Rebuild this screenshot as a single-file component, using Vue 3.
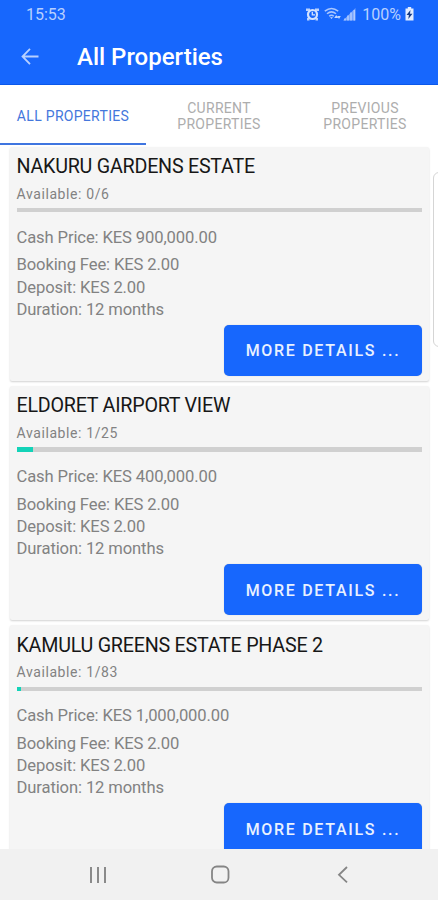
<script setup>
const tabs = ['ALL PROPERTIES', 'CURRENT PROPERTIES', 'PREVIOUS PROPERTIES']

const properties = [
  { name: 'NAKURU GARDENS ESTATE', taken: 0, total: 6, price: '900,000.00' },
  { name: 'ELDORET AIRPORT VIEW', taken: 1, total: 25, price: '400,000.00' },
  { name: 'KAMULU GREENS ESTATE PHASE 2', taken: 1, total: 83, price: '1,000,000.00' },
]
</script>

<template>
  <div class="screen">
    <header class="header">
      <div class="status">
        <span class="time">15:53</span>
        <div class="status-right">
          <svg class="alarm" width="13" height="13" viewBox="0 0 13 13">
            <path d="M0 .5h4v2.500H0zM13 .5H9v2.500h4zM1 10h2.500v2.500H1zM12 10H9.500v2.500H12z" fill="#bcd3ff" />
            <circle cx="6.500" cy="6.500" r="4.500" fill="#1767fb" stroke="#d3e2ff" stroke-width="2.200" />
            <path d="M6.300 3.800v3h2.700" fill="none" stroke="#d3e2ff" stroke-width="1.300" />
          </svg>
          <svg class="wifi" width="18" height="14" viewBox="0 0 18 14">
            <g fill="none" stroke="#a9c6ff" stroke-width="1.500">
              <path d="M.8 4.200Q7.500-1.300 14.200 4.200" />
              <path d="M3 6.800Q7.500 3 12 6.800" />
              <path d="M5.200 9.200Q7.500 7.200 9.800 9.200" />
            </g>
            <path d="M6 10.200h3L7.500 12zM10.200 11l2-3 2 3zM13.200 9h3.600L15 12z" fill="#c4d8ff" />
          </svg>
          <svg class="signal" width="13" height="13" viewBox="0 0 13 13">
            <path d="M0 12.500 12.500 0v12.500z" fill="#75a4ff" />
            <path d="M2 12.500v-2M5 12.500v-5M8 12.500v-8M11.300 12.500V2" stroke="#b0caff" stroke-width="1.500" />
          </svg>
          <span class="percent">100%</span>
          <svg class="battery" width="9" height="14" viewBox="0 0 9 14">
            <path d="M2.800 0h3.400v1.500H8.500v12H.5v-12h2.300z" fill="#e2ecff" />
            <path d="M5.500 3 1.500 8h2.400l-.6 4L7.500 6.800H5z" fill="#173b85" />
          </svg>
        </div>
      </div>
      <div class="toolbar">
        <svg class="back" width="18" height="18" viewBox="0 0 18 18">
          <path d="M17.500 8.500H2M9 .8 1.500 8.500 9 16.200" fill="none" stroke="#b7d0ff" stroke-width="1.800" />
        </svg>
        <h1>All Properties</h1>
      </div>
    </header>

    <nav class="tabs">
      <div v-for="(tab, i) in tabs" :key="tab" class="tab" :class="{ active: i === 0 }">
        <span>{{ tab }}</span>
      </div>
    </nav>

    <main class="list">
      <article v-for="p in properties" :key="p.name" class="card">
        <h2>{{ p.name }}</h2>
        <p class="available">Available: {{ p.taken }}/{{ p.total }}</p>
        <div class="track">
          <div class="fill" :style="{ width: (p.taken / p.total) * 100 + '%' }"></div>
        </div>
        <p class="price">Cash Price: KES {{ p.price }}</p>
        <p class="line">Booking Fee: KES 2.00</p>
        <p class="line">Deposit: KES 2.00</p>
        <p class="line">Duration: 12 months</p>
        <button class="more">MORE DETAILS ...</button>
      </article>
      <div class="edge-panel"></div>
    </main>

    <footer class="navbar">
      <svg width="18" height="18" viewBox="0 0 18 18">
        <path d="M2 1v16M9 1v16M16 1v16" stroke="#8a8a8a" stroke-width="2" />
      </svg>
      <svg width="20" height="20" viewBox="0 0 20 20">
        <rect x="1" y="1.500" width="16.500" height="16" rx="4.800" fill="none" stroke="#858585" stroke-width="1.800" />
      </svg>
      <svg width="18" height="18" viewBox="0 0 18 18">
        <path d="M13 1 5 8.800l8 7.500" fill="none" stroke="#858585" stroke-width="1.800" />
      </svg>
    </footer>
  </div>
</template>

<style>
body {
  margin: 0;
  background: #fff;
}
</style>

<style scoped>
.screen {
  width: 438px;
  height: 900px;
  display: flex;
  flex-direction: column;
  overflow: hidden;
  background: #fff;
  font-family: Roboto, sans-serif;
}
h1, h2, p { margin: 0; font-weight: 400; white-space: nowrap; }
.header {
  flex: none;
  box-sizing: border-box;
  height: 85px;
  background: #1767fd;
  border-bottom: 1px solid #0b58ea;
}
.status {
  height: 28px;
  padding: 0 24px 0 26px;
  display: flex;
  align-items: center;
  justify-content: space-between;
  color: #b7d0ff;
  font-size: 16px;
}
.status-right { display: flex; align-items: center; }
.wifi { margin-left: 5px; }
.signal { margin-left: 1px; }
.percent { margin-left: 6px; }
.battery { margin-left: 4px; }
.toolbar {
  height: 57px;
  display: flex;
  align-items: center;
  padding-left: 21px;
}
h1 {
  margin-left: 38px;
  padding-top: 1px;
  color: #fff;
  font-size: 24px;
  font-weight: 500;
}
.tabs {
  flex: none;
  height: 60px;
  display: grid;
  grid-template-columns: repeat(3, 1fr);
  background: #fff;
}
.tab {
  box-sizing: border-box;
  display: flex;
  align-items: center;
  justify-content: center;
  padding: 3px 20px 0;
  border-bottom: 2px solid transparent;
  color: #adadad;
  font-size: 14px;
  line-height: 16px;
  letter-spacing: 0.300px;
  text-align: center;
}
.tab.active {
  padding: 3px 0 0;
  color: #4477dc;
  border-bottom-color: #3f75e0;
}
.list {
  position: relative;
  flex: 1;
  min-height: 0;
  overflow: hidden;
  display: flex;
  flex-direction: column;
  gap: 5.300px;
  padding: 1.500px 9.500px 0;
}
.card {
  flex: none;
  box-sizing: border-box;
  height: 234px;
  padding: 7.700px 6.500px 0 7px;
  display: flex;
  flex-direction: column;
  background: #f5f5f5;
  border-radius: 2px;
  box-shadow: 0 1px 2px rgba(0, 0, 0, 0.18);
}
h2 { color: #171717; font-size: 19.700px; line-height: 25px; letter-spacing: -0.240px; }
.available {
  margin-top: 4.500px;
  color: #828282;
  font-size: 14px;
  line-height: 20px;
  letter-spacing: 0.600px;
}
.track { height: 4.500px; margin-top: 4.300px; background: #d0d0d0; }
.fill { height: 100%; background: #13d3b8; }
.price, .line {
  color: #828282;
  font-size: 16.600px;
  line-height: 22.300px;
  letter-spacing: -0.120px;
}
.price { margin-top: 14.300px; margin-bottom: 5.200px; }
.more {
  align-self: flex-end;
  width: 198px;
  height: 51.500px;
  margin-top: 3.500px;
  padding: 1px 0 0;
  border: 0;
  border-radius: 5px;
  background: #1767fd;
  box-shadow: 0 0 1px rgba(0, 0, 0, 0.25);
  color: #e9f1ff;
  font-family: inherit;
  font-size: 16px;
  font-weight: 500;
  letter-spacing: 1.700px;
}
.edge-panel {
  position: absolute;
  top: 27px;
  right: -8px;
  width: 11px;
  height: 173px;
  border: 1px solid #d5d5d5;
  border-radius: 6px;
  background: #fff;
}
.navbar {
  flex: none;
  box-sizing: border-box;
  height: 51px;
  padding: 0 86px 0 89px;
  display: flex;
  align-items: center;
  justify-content: space-between;
  background: #f1f1f1;
}
</style>
